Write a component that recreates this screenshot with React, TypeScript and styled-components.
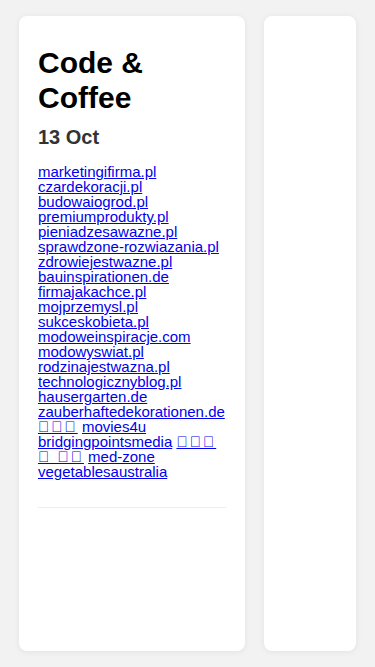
import styled, { createGlobalStyle } from 'styled-components'

const GlobalStyle = createGlobalStyle`
  html,
  body {
    margin: 0;
    padding: 0;
    background: #f2f2f2;
    font-family: 'Liberation Sans', Arial, sans-serif;
  }
`

const Board = styled.main`
  display: flex;
  gap: 19px;
  height: 100vh;
  padding: 16px 19px;
  box-sizing: border-box;
  overflow: hidden;
`

const Card = styled.section<{ $width: number }>`
  flex: 0 0 ${(p) => p.$width}px;
  background: #fff;
  border-radius: 8px;
  box-shadow: 0 1px 6px rgba(0, 0, 0, 0.07);
  padding: 30px 19px 0;
  box-sizing: border-box;
`

const Title = styled.h1`
  margin: 0;
  font-size: 30px;
  font-weight: 700;
  line-height: 1.15;
  color: #000;
`

const DateLine = styled.h2`
  margin: 11px 0 0;
  font-size: 20px;
  font-weight: 700;
  line-height: 1.15;
  color: #333;
`

const Links = styled.p`
  margin: 15px 0 0;
  font-size: 15px;
  line-height: 15px;

  a {
    color: #0000ee;
    text-decoration: underline;
  }
`

// characters without a glyph render as boxes; space them like the original
const Missing = styled.a`
  letter-spacing: 2px;
`

const Divider = styled.hr`
  margin: 28px 0 0;
  border: 0;
  border-top: 1px solid #eeeeee;
`

const links = [
  'marketingifirma.pl',
  'czardekoracji.pl',
  'budowaiogrod.pl',
  'premiumprodukty.pl',
  'pieniadzesawazne.pl',
  'sprawdzone-rozwiazania.pl',
  'zdrowiejestwazne.pl',
  'bauinspirationen.de',
  'firmajakachce.pl',
  'mojprzemysl.pl',
  'sukceskobieta.pl',
  'modoweinspiracje.com',
  'modowyswiat.pl',
  'rodzinajestwazna.pl',
  'technologicznyblog.pl',
  'hausergarten.de',
  'zauberhaftedekorationen.de',
  '\uE000\uE001\uE002',
  'movies4u',
  'bridgingpointsmedia',
  '\uE003\uE004\uE005 \uE006 \uE007\uE008',
  'med-zone',
  'vegetablesaustralia',
]

export default function App() {
  return (
    <>
      <GlobalStyle />
      <Board>
        <Card $width={226}>
          <Title>Code &amp; Coffee</Title>
          <DateLine>13 Oct</DateLine>
          <Links>
            {links.map((l, i) => {
              const Link = /[\uE000-\uF8FF]/.test(l) ? Missing : 'a'
              return (
                <span key={l}>
                  <Link href='#'>{l}</Link>
                  {i < links.length - 1 && ' '}
                </span>
              )
            })}
          </Links>
          <Divider />
        </Card>
        <Card $width={92} />
      </Board>
    </>
  )
}
